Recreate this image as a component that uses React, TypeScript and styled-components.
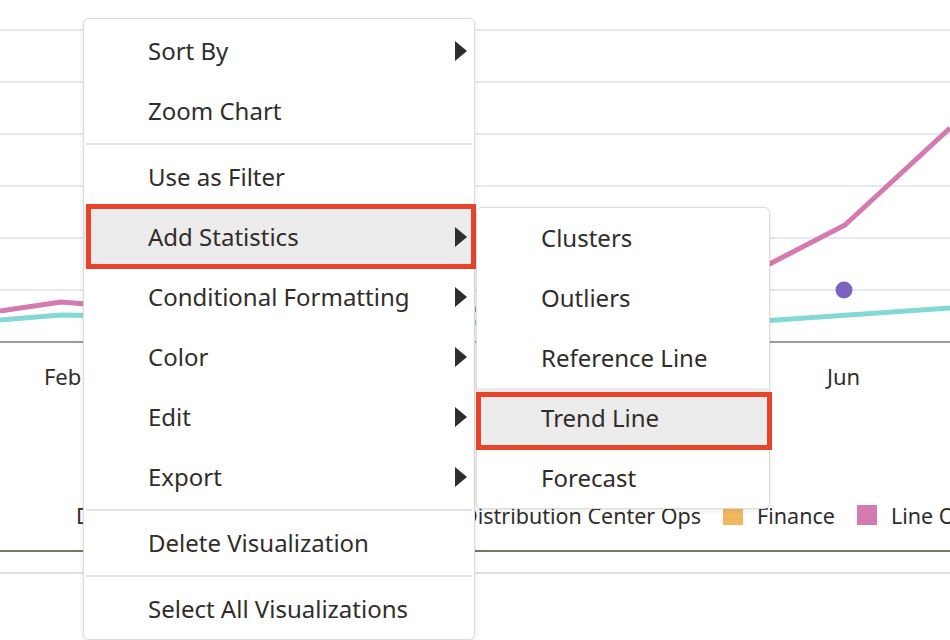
import React from 'react';
import styled, { createGlobalStyle, css } from 'styled-components';

const GlobalStyle = createGlobalStyle`
  html, body { margin: 0; padding: 0; background: #ffffff; }
  body { font-family: "Noto Sans", "Open Sans", sans-serif; color: #312d2a; }
  * { box-sizing: border-box; }
`;

const Page = styled.div`
  position: relative;
  width: 950px;
  height: 640px;
  overflow: hidden;
  background: #ffffff;
`;

const Plot = styled.svg`
  display: block;
`;

const AxisLabels = styled.div`
  display: grid;
  grid-template-columns: repeat(5, 195.25px);
  margin-left: -35px;
  height: 66px;
`;

const AxisLabel = styled.span`
  text-align: center;
  line-height: 64px;
  font-size: 22px;
  color: #312d2a;
`;

const Legend = styled.div`
  display: flex;
  align-items: center;
  height: 30px;
  margin-top: 90px;
  padding-left: 76px;
  white-space: nowrap;
  font-size: 21.5px;
  color: #312d2a;
`;

const LegendTitle = styled.span`
  flex: none;
  width: 352px;
`;

const LegendItem = styled.span`
  flex: none;
  display: flex;
  align-items: center;
  gap: 14px;
  margin-right: 22px;
`;

const Swatch = styled.span<{ $color: string }>`
  width: 20px;
  height: 20px;
  background: ${(p) => p.$color};
`;

const Rule = styled.div<{ $color: string; $gap: number }>`
  height: 2px;
  margin-top: ${(p) => p.$gap}px;
  background: ${(p) => p.$color};
`;

const Menu = styled.div<{ $left: number; $top: number; $width: number; $pad: number }>`
  position: absolute;
  left: ${(p) => p.$left}px;
  top: ${(p) => p.$top}px;
  width: ${(p) => p.$width}px;
  padding-top: ${(p) => p.$pad}px;
  background: #ffffff;
  border: 1px solid #dddcd8;
  border-radius: 6px;
  box-shadow: 0 1px 5px rgba(0, 0, 0, 0.1);
`;

const Item = styled.div<{ $active?: boolean }>`
  position: relative;
  height: 60px;
  display: flex;
  align-items: center;
  padding: 0 7px 2px 64px;
  font-size: 24px;
  color: #312d2a;
  white-space: nowrap;
  ${(p) =>
    p.$active &&
    css`
      background: #ececec;
    `}
`;

const ItemLabel = styled.span`
  flex: 1;
`;

const Arrow = styled.span`
  width: 0;
  height: 0;
  margin-top: 2px;
  border-left: 12px solid #312d2a;
  border-top: 10px solid transparent;
  border-bottom: 10px solid transparent;
`;

const Callout = styled.span<{ $t: number; $r: number; $b: number; $l: number }>`
  position: absolute;
  top: ${(p) => p.$t}px;
  right: ${(p) => p.$r}px;
  bottom: ${(p) => p.$b}px;
  left: ${(p) => p.$l}px;
  border: 5px solid #e8432b;
  pointer-events: none;
`;

const Separator = styled.div`
  height: 2px;
  margin: 2px 2px;
  background: #e4e3df;
`;

type Entry =
  | { kind: 'item'; label: string; sub?: boolean; active?: boolean; callout?: [number, number, number, number] }
  | { kind: 'sep' };

const mainEntries: Entry[] = [
  { kind: 'item', label: 'Sort By', sub: true },
  { kind: 'item', label: 'Zoom Chart' },
  { kind: 'sep' },
  { kind: 'item', label: 'Use as Filter' },
  { kind: 'item', label: 'Add Statistics', sub: true, active: true, callout: [-3, -2, -2, 2] },
  { kind: 'item', label: 'Conditional Formatting', sub: true },
  { kind: 'item', label: 'Color', sub: true },
  { kind: 'item', label: 'Edit', sub: true },
  { kind: 'item', label: 'Export', sub: true },
  { kind: 'sep' },
  { kind: 'item', label: 'Delete Visualization' },
  { kind: 'sep' },
  { kind: 'item', label: 'Select All Visualizations' },
];

const subEntries: Entry[] = [
  { kind: 'item', label: 'Clusters' },
  { kind: 'item', label: 'Outliers' },
  { kind: 'item', label: 'Reference Line' },
  { kind: 'item', label: 'Trend Line', active: true, callout: [4, -3, -2, -1] },
  { kind: 'item', label: 'Forecast' },
];

function renderEntries(entries: Entry[]) {
  return entries.map((e, i) => {
    if (e.kind === 'sep') return <Separator key={i} />;
    return (
      <Item key={i} $active={e.active}>
        <ItemLabel>{e.label}</ItemLabel>
        {e.sub && <Arrow />}
        {e.callout && <Callout $t={e.callout[0]} $r={e.callout[1]} $b={e.callout[2]} $l={e.callout[3]} />}
      </Item>
    );
  });
}

const gridYs = [30, 82, 134, 186, 238, 290];
const months = ['Feb', '', '', '', 'Jun'];

export default function App() {
  return (
    <>
      <GlobalStyle />
      <Page>
        <Plot width={950} height={344} viewBox="0 0 950 344">
          {gridYs.map((y) => (
            <line key={y} x1={0} x2={950} y1={y} y2={y} stroke="#e6e9ed" strokeWidth={2} />
          ))}
          <line x1={0} x2={950} y1={342} y2={342} stroke="#9b9b9b" strokeWidth={2} />
          <polyline
            points="0,320 61,315 258,318 453,322 690,326 950,308"
            fill="none"
            stroke="#84d8d6"
            strokeWidth={5}
            strokeLinejoin="round"
          />
          <polyline
            points="0,311 61,302 258,318 453,310 690,305 845,225 950,128"
            fill="none"
            stroke="#d57ab0"
            strokeWidth={5}
            strokeLinejoin="round"
          />
          <circle cx={844} cy={290} r={8.5} fill="#7c63c2" />
        </Plot>
        <AxisLabels>
          {months.map((m, i) => (
            <AxisLabel key={i}>{m}</AxisLabel>
          ))}
        </AxisLabels>
        <Legend>
          <LegendTitle>Department</LegendTitle>
          <LegendItem>
            <Swatch $color="#7dd3d0" />
            Distribution Center Ops
          </LegendItem>
          <LegendItem>
            <Swatch $color="#f2b661" />
            Finance
          </LegendItem>
          <LegendItem>
            <Swatch $color="#d57ab0" />
            Line Operations
          </LegendItem>
        </Legend>
        <Rule $color="#6b7d58" $gap={20} />
        <Rule $color="#e2e1dd" $gap={20} />

        <Menu $left={83} $top={18} $width={392} $pad={2}>
          {renderEntries(mainEntries)}
        </Menu>
        <Menu $left={476} $top={207} $width={294} $pad={0}>
          {renderEntries(subEntries)}
        </Menu>
      </Page>
    </>
  );
}
